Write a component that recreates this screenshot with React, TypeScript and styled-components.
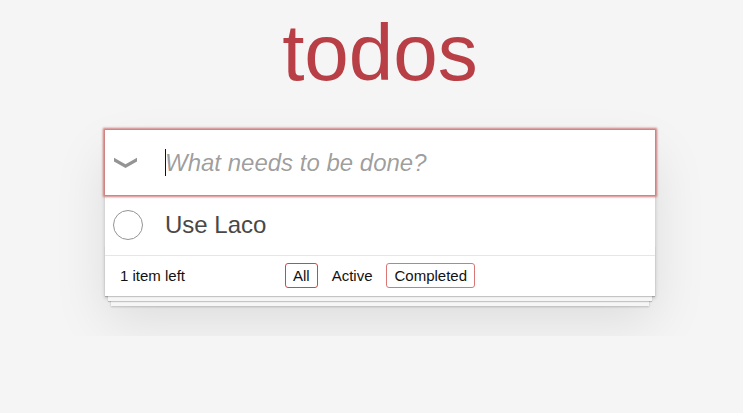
import React from 'react';
import styled, { createGlobalStyle, css } from 'styled-components';

type FilterState = 'selected' | 'hover' | 'idle';

const todos = [{ id: 1, title: 'Use Laco', completed: false }];

const filters: Array<{ label: string; state: FilterState }> = [
  { label: 'All', state: 'selected' },
  { label: 'Active', state: 'idle' },
  { label: 'Completed', state: 'hover' },
];

const GlobalStyle = createGlobalStyle`
  html,
  body {
    margin: 0;
    padding: 0;
  }
  body {
    background: #f5f5f5;
    font-family: 'Liberation Sans', Arial, sans-serif;
    font-size: 14px;
    line-height: 1.4em;
    font-weight: 300;
    color: #111;
    -webkit-font-smoothing: antialiased;
  }
`;

const Page = styled.div`
  width: 550px;
  padding: 13px 0 40px 105px;
`;

// ANCHOR Title
const Title = styled.h1`
  margin: 0;
  font-size: 80px;
  line-height: 80px;
  font-weight: 200;
  text-align: center;
  color: #b83f45;
`;

// ANCHOR App card
const TodoApp = styled.section`
  margin-top: 37px;
  background: #fff;
  position: relative;
  box-shadow: 0 2px 4px 0 rgba(0, 0, 0, 0.2), 0 25px 50px 0 rgba(0, 0, 0, 0.1);
`;

const Header = styled.header<{ $focused?: boolean }>`
  position: relative;
  z-index: 3;
  display: flex;
  align-items: center;
  height: 65px;
  background: #fff;
  ${(p) =>
    p.$focused &&
    css`
      box-shadow: 0 0 2px 2px #cf7d7d;
    `};
`;

const ToggleAll = styled.button`
  flex: 0 0 60px;
  height: 100%;
  display: flex;
  align-items: center;
  padding: 1px 0 0 9px;
  margin: 0;
  border: none;
  background: none;
  box-sizing: border-box;
  cursor: pointer;
`;

const NewTodo = styled.input`
  flex: 1;
  height: 65px;
  margin: 0;
  padding: 16px 16px 16px 0;
  border: none;
  outline: none;
  background: transparent;
  box-sizing: border-box;
  font-family: inherit;
  font-size: 24px;
  line-height: 1.4em;
  color: #111;
  caret-color: transparent;

  &::placeholder {
    font-style: italic;
    font-weight: 400;
    color: rgba(0, 0, 0, 0.4);
  }
`;

const Caret = styled.span`
  position: absolute;
  left: 60px;
  top: 19px;
  width: 1px;
  height: 27px;
  background: #111;
  pointer-events: none;
`;

// ANCHOR List
const TodoList = styled.ul`
  margin: 0;
  padding: 0;
  list-style: none;
  border-top: 1px solid #e6e6e6;
  position: relative;
  z-index: 2;
`;

const TodoItem = styled.li`
  display: flex;
  align-items: center;
  font-size: 24px;
  border-bottom: 1px solid #ededed;

  &:last-child {
    border-bottom: none;
  }
`;

const Toggle = styled.button`
  flex: 0 0 60px;
  display: flex;
  align-items: center;
  padding: 0 0 0 8px;
  margin: 0;
  border: none;
  background: none;
  box-sizing: border-box;
  cursor: pointer;
`;

const TodoLabel = styled.label`
  flex: 1;
  padding: 15px 15px 15px 0;
  line-height: 1.2;
  color: #484848;
  word-break: break-all;
`;

// ANCHOR Footer
const Footer = styled.footer`
  position: relative;
  display: grid;
  grid-template-columns: 1fr auto 1fr;
  grid-template-rows: 20px;
  align-items: center;
  height: 20px;
  padding: 10px 15px;
  border-top: 1px solid #e6e6e6;
  font-size: 15px;
  color: #111;

  &::before {
    content: '';
    position: absolute;
    right: 0;
    bottom: 0;
    left: 0;
    height: 50px;
    overflow: hidden;
    pointer-events: none;
    box-shadow: 0 1px 1px rgba(0, 0, 0, 0.2), 0 8px 0 -3px #f6f6f6,
      0 9px 1px -3px rgba(0, 0, 0, 0.2), 0 16px 0 -6px #f6f6f6,
      0 17px 2px -6px rgba(0, 0, 0, 0.2);
  }
`;

const Count = styled.span`
  line-height: 20px;
  text-align: left;

  strong {
    font-weight: 300;
  }
`;

const Filters = styled.ul`
  display: flex;
  margin: 0;
  padding: 0;
  list-style: none;
`;

const FilterLink = styled.a<{ $state: FilterState }>`
  display: inline-block;
  margin: 0 3px;
  padding: 3px 7px;
  line-height: 17px;
  color: inherit;
  text-decoration: none;
  border: 1px solid transparent;
  border-radius: 3px;

  ${(p) =>
    p.$state === 'selected' &&
    css`
      border-color: #ce4646;
    `};
  ${(p) =>
    p.$state === 'hover' &&
    css`
      border-color: #db7676;
    `};

  &:hover {
    border-color: #db7676;
  }
`;

const Chevron = () => (
  <svg width="23" height="12" viewBox="0 0 23 12" aria-hidden="true">
    <polygon points="0,0.8 11.5,7.2 23,0.8 23,4.6 11.5,11 0,4.6" fill="#949494" />
  </svg>
);

const Circle = () => (
  <svg width="30" height="30" viewBox="0 0 30 30" aria-hidden="true">
    <circle cx="15" cy="15" r="14.5" fill="none" stroke="#949494" strokeWidth="1" />
  </svg>
);

export default function App() {
  const left = todos.filter((t) => !t.completed).length;
  return (
    <>
      <GlobalStyle />
      <Page>
        <Title>todos</Title>
        <TodoApp>
          <Header $focused>
            <ToggleAll aria-label="Mark all as complete">
              <Chevron />
            </ToggleAll>
            <NewTodo placeholder="What needs to be done?" />
            <Caret />
          </Header>
          <TodoList>
            {todos.map((todo) => (
              <TodoItem key={todo.id}>
                <Toggle aria-label="Toggle">
                  <Circle />
                </Toggle>
                <TodoLabel>{todo.title}</TodoLabel>
              </TodoItem>
            ))}
          </TodoList>
          <Footer>
            <Count>
              <strong>{left}</strong> item left
            </Count>
            <Filters>
              {filters.map((f) => (
                <li key={f.label}>
                  <FilterLink href="#" $state={f.state}>
                    {f.label}
                  </FilterLink>
                </li>
              ))}
            </Filters>
            <span />
          </Footer>
        </TodoApp>
      </Page>
    </>
  );
}
